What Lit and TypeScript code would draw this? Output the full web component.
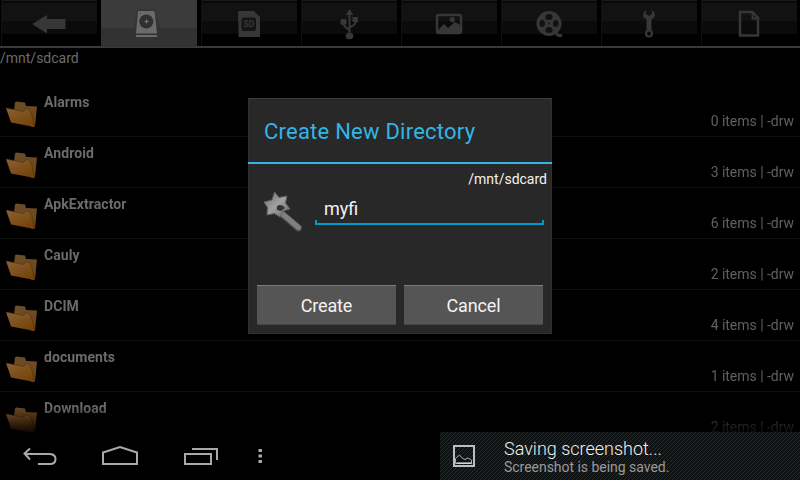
import { LitElement, html, svg, css } from "lit";
import { customElement } from "lit/decorators.js";
import { classMap } from "lit/directives/class-map.js";

// Tab icons share a 96x46 drawing area, one unit per pixel.
const tabIcons = [
  svg`<path d="M31 24 46 15V19H64.500V29H46V33.500Z" fill="currentColor"/>`,
  svg`<path d="M33 28 36.500 10Q37 9 38 9H52Q53.500 9 54 10L59 28Z" fill="#343434"/>
    <path d="M37 12Q37 11 38 11H52.500Q53.500 11 53.700 12L56 33.500H35Z" fill="currentColor"/>
    <path d="M35 35H56V37H35Z" fill="currentColor"/><circle cx="45.300" cy="21.500" r="7" fill="#303030"/>
    <path d="M43.500 21.500H47.500M45.500 19.500V23.500" stroke="#777" stroke-width="1.200"/><path d="M39 13.500H40" stroke="#303030"/>`,
  svg`<path d="M37.500 11H53L59 17V37H37.500V22L37 20V12Z" fill="currentColor"/>
    <rect x="40.500" y="17.500" width="14.500" height="13.500" rx="2" fill="#151515"/>
    <text x="47.800" y="27.300" text-anchor="middle" font-size="8.500" font-weight="700" fill="currentColor">SD</text>`,
  svg`<path d="M48.500 13V35M48.500 30.500C47.500 27.500 42.500 29 42.500 22M48.500 28C49 25.500 55 27 55 20" stroke="currentColor" stroke-width="2" fill="none"/>
    <path d="M48.500 9 52.500 15H44.500Z" fill="currentColor"/><circle cx="42.500" cy="22" r="3.200" fill="currentColor"/>
    <rect x="51.500" y="17" width="5.500" height="5" fill="currentColor"/><ellipse cx="48.500" cy="36" rx="3.800" ry="3.200" fill="currentColor"/>`,
  svg`<rect x="36" y="15" width="24" height="18" rx="1.500" stroke="currentColor" stroke-width="2.500" fill="none"/>
    <path d="M37 30 43 24 47 28 54 22 59 25V33H37Z" fill="currentColor"/><circle cx="51.300" cy="19.600" r="2.600" fill="currentColor"/>`,
  svg`<circle cx="48" cy="23.500" r="12.500" fill="currentColor"/><path d="M54 31C56 35 57 36 61 35.500" stroke="currentColor" stroke-width="3" fill="none"/>
    <g fill="#121212"><ellipse cx="48" cy="17" rx="3.600" ry="3"/><ellipse cx="48" cy="30" rx="3.600" ry="3"/><ellipse cx="41.200" cy="23.500" rx="2.800" ry="3.500"/><ellipse cx="54.800" cy="23.500" rx="2.800" ry="3.500"/><circle cx="48" cy="23.500" r="1"/></g>`,
  svg`<path d="M45 10V14L48 16 51 14V10Q54 12 54 15 53.500 18 50.500 19V30H45.500V19Q42 18 42 15 42 12 45 10Z" fill="currentColor"/>
    <circle cx="48" cy="33.500" r="3" stroke="currentColor" stroke-width="2.200" fill="none"/>`,
  svg`<path d="M39 12H51.500L57 18V35.500H39Z" stroke="currentColor" stroke-width="2.500" fill="none"/><path d="M51.500 12V18.500H57" stroke="currentColor" stroke-width="1.800" fill="none"/>`,
];

const ACTIVE_TAB = 1;

const folders = [
  { name: "Alarms", items: 0 },
  { name: "Android", items: 3 },
  { name: "ApkExtractor", items: 6 },
  { name: "Cauly", items: 2 },
  { name: "DCIM", items: 4 },
  { name: "documents", items: 1 },
  { name: "Download", items: 2 },
];

@customElement("folder-row")
class FolderRow extends LitElement {
  static properties = { name: {}, items: { type: Number } };
  declare name: string;
  declare items: number;

  static styles = css`
    :host {
      display: flex;
      box-sizing: border-box;
      height: 51px;
      padding: 0 6px 0 5px;
      border-bottom: 1px solid #101010;
      color: #6b6b6b;
    }
    .icon { width: 34px; height: 34px; margin-top: 12px; flex: none; }
    .name { margin: 7px 0 0 5px; font-size: 14px; line-height: 18px; font-weight: 700; letter-spacing: .08px; }
    .info { margin: 26px 0 0 auto; font-size: 14px; line-height: 18px; color: #606060; letter-spacing: -.03px; }
  `;

  render() {
    return html`
      <svg class="icon" viewBox="0 0 34 34">
        <defs>
          <linearGradient id="back" x1="0" y1="0" x2="0" y2="1"><stop stop-color="#6b4d2a"/><stop offset="1" stop-color="#704511"/></linearGradient>
          <linearGradient id="front" x1="0" y1="0" x2=".6" y2="1"><stop stop-color="#8a6436"/><stop offset=".5" stop-color="#80521f"/><stop offset="1" stop-color="#744409"/></linearGradient>
        </defs>
        <path d="M9 12 10 4.500 11 3.500 20 4.500 21 8 32 8.500 30 28 27 29Z" fill="url(#back)"/>
        <path d="M1 10 19 13.500Q20 10.500 22.500 10.500 27.500 13 29.500 29L6 24.500Z" fill="url(#front)"/>
        <path d="M1 10 18.500 13.500Q20 10.500 22.500 10.500 27.500 13 29.300 28.500" stroke="#4a2e0e" stroke-width=".6" fill="none"/>
      </svg>
      <div class="name">${this.name}</div>
      <div class="info">${this.items} items | -drw</div>
    `;
  }
}

@customElement("create-dialog")
class CreateDialog extends LitElement {
  static styles = css`
    :host {
      display: flex;
      flex-direction: column;
      box-sizing: border-box;
      width: 304px;
      height: 236px;
      background: #282828;
      border: 1px solid #303030;
      border-top-color: #3c3c3c;
      color: #f3f3f3;
    }
    .title {
      height: 63px;
      margin: 0 -1px;
      padding-left: 16px;
      border-bottom: 2px solid #33b5e5;
      font-size: 22px;
      line-height: 65px;
      color: #33b5e5;
      letter-spacing: .23px;
    }
    .body { display: flex; flex-direction: column; height: 121px; }
    .path { align-self: flex-end; margin: 6px 4px 0 0; font-size: 14px; line-height: 18px; }
    .entry { display: flex; padding: 3px 7px 0 13px; }
    .wand { width: 44px; height: 44px; margin-top: -1px; flex: none; }
    .field {
      flex: 1;
      height: 34px;
      margin-left: 9px;
      padding-left: 9px;
      font-size: 18px;
      line-height: 35px;
      background:
        linear-gradient(#0099cc, #0099cc) left bottom / 100% 2px no-repeat,
        linear-gradient(#0099cc, #0099cc) left bottom / 2px 5px no-repeat,
        linear-gradient(#0099cc, #0099cc) right bottom / 2px 5px no-repeat;
    }
    .actions { display: flex; gap: 8px; padding: 0 8px; }
    .button {
      flex: 1;
      box-sizing: border-box;
      height: 40px;
      border-top: 1px solid #7b7b7b;
      border-bottom: 1px solid #444;
      background: #555;
      font-size: 18px;
      line-height: 40px;
      letter-spacing: -.15px;
      text-align: center;
    }
  `;

  render() {
    return html`
      <div class="title">Create New Directory</div>
      <div class="body">
        <div class="path">/mnt/sdcard</div>
        <div class="entry">
          <svg class="wand" viewBox="0 0 44 44">
            <defs><linearGradient id="metal" x1="0" y1="0" x2="1" y2="1"><stop stop-color="#6e6e6e"/><stop offset=".5" stop-color="#a0a0a0"/><stop offset="1" stop-color="#666"/></linearGradient></defs>
            <path d="M20 24 36.500 38" stroke="#4c4c4c" stroke-width="7" stroke-linecap="round"/>
            <path d="M20 23.500 36.500 37.500" stroke="#808080" stroke-width="5" stroke-linecap="round"/>
            <path d="M12.500 2 17 7.500 25 6 23.500 13 28 19 21 21 18 27 12.500 23.500 5 25 5.500 17.500 2 12 10 10Z" fill="url(#metal)" stroke="#606060"/>
            <path d="M15 20Q14 15 18 15 21 15 23 18L19 21Z" fill="#333"/>
          </svg>
          <div class="field">myfi</div>
        </div>
      </div>
      <div class="actions">
        <div class="button">Create</div>
        <div class="button">Cancel</div>
      </div>
    `;
  }
}

@customElement("app-root")
class AppRoot extends LitElement {
  static styles = css`
    :host {
      display: block;
      position: relative;
      width: 800px;
      height: 480px;
      overflow: hidden;
      background: #000;
      font-family: Roboto, "Liberation Sans", sans-serif;
    }
    .screen { display: flex; flex-direction: column; height: 480px; }
    .tabs { display: flex; gap: 4px; height: 46px; padding: 0 3px 0 1px; border-bottom: 2px solid #3a3a3a; flex: none; }
    .tab {
      flex: 1;
      color: #373737;
      background: linear-gradient(#191919 0 1px, #090909 1px 3px, #121212 3px 21px, #0b0b0b 21px 34px, #000 34px);
      box-shadow: inset 1px 0 #101010;
    }
    .active { color: #6b6b6b; background: linear-gradient(#3b3b3b 0 28px, #323232 28px); box-shadow: none; margin-bottom: -1px; }
    .tab-icon { display: block; width: 96px; height: 46px; }
    .location { height: 38px; flex: none; font-size: 14px; line-height: 20px; color: #6b6b6b; }
    .list { height: 346px; flex: none; overflow: hidden; }
    .faded { -webkit-mask-image: linear-gradient(#000 320px, transparent 350px); mask-image: linear-gradient(#000 320px, transparent 350px); }
    .bottom { display: flex; height: 48px; }
    .nav { display: block; width: 440px; height: 48px; }
    .notice { display: grid; flex: 1; }
    .hatch { grid-area: 1 / 1; width: 360px; height: 48px; }
    .notice-content { grid-area: 1 / 1; display: flex; }
    .notice-icon { width: 24px; height: 24px; margin: 12px 0 0 12px; }
    .message { margin: 5px 0 0 28px; }
    .headline { font-size: 18px; line-height: 24px; font-weight: 300; color: #f0f0f0; }
    .detail { font-size: 14px; line-height: 13px; color: #999; letter-spacing: -.03px; }
    .dialog { position: absolute; left: 248px; top: 98px; }
  `;

  render() {
    return html`
      <div class="screen">
        <div class="tabs">
          ${tabIcons.map((icon, i) => html`
            <div class=${classMap({ tab: true, active: i === ACTIVE_TAB })}>
              <svg class="tab-icon" viewBox="0 0 96 46">${icon}</svg>
            </div>`)}
        </div>
        <div class="location">/mnt/sdcard</div>
        <div class="list faded">
          ${folders.map((f) => html`<folder-row .name=${f.name} .items=${f.items}></folder-row>`)}
        </div>
        <div class="bottom">
          <svg class="nav" viewBox="0 0 440 48" fill="none" stroke="#a9a9a9" stroke-width="2">
            <path d="M30 16.500 24.500 21.500 30 27.500M25 22H50Q55.500 22.500 55.500 27 55.500 32 50 32H38"/>
            <path d="M103 32V20.500L120 15 137 20.500V32Z"/>
            <path d="M185 22H211V32H185ZM192 17H217V28"/>
            <path d="M258.500 18.500H262M258.500 24H262M258.500 29.500H262" stroke-width="3.200"/>
          </svg>
          <div class="notice">
            <svg class="hatch" viewBox="0 0 360 48" shape-rendering="crispEdges">
              <defs>
                <pattern id="stripes" width="4" height="4" patternUnits="userSpaceOnUse">
                  <rect width="4" height="4" fill="#0f1213"/>
                  <path d="M3 0H4V1H3ZM2 1H3V2H2ZM1 2H2V3H1ZM0 3H1V4H0Z" fill="#14303a"/>
                </pattern>
              </defs>
              <rect width="360" height="48" fill="url(#stripes)"/>
            </svg>
            <div class="notice-content">
              <svg class="notice-icon" viewBox="0 0 24 24" fill="none" stroke="#bdbdbd">
                <path d="M2 2H22V22H2Z" stroke-width="2"/>
                <path d="M3.500 19.500V14.500L7.500 11 10.500 14.500 13 15.500 16 14 19.500 16V19.500Z" fill="#0d1113" stroke="#aaa"/>
                <path d="M4.500 19H19.500" stroke="#fff"/>
              </svg>
              <div class="message">
                <div class="headline">Saving screenshot...</div>
                <div class="detail">Screenshot is being saved.</div>
              </div>
            </div>
          </div>
        </div>
      </div>
      <create-dialog class="dialog"></create-dialog>
    `;
  }
}
